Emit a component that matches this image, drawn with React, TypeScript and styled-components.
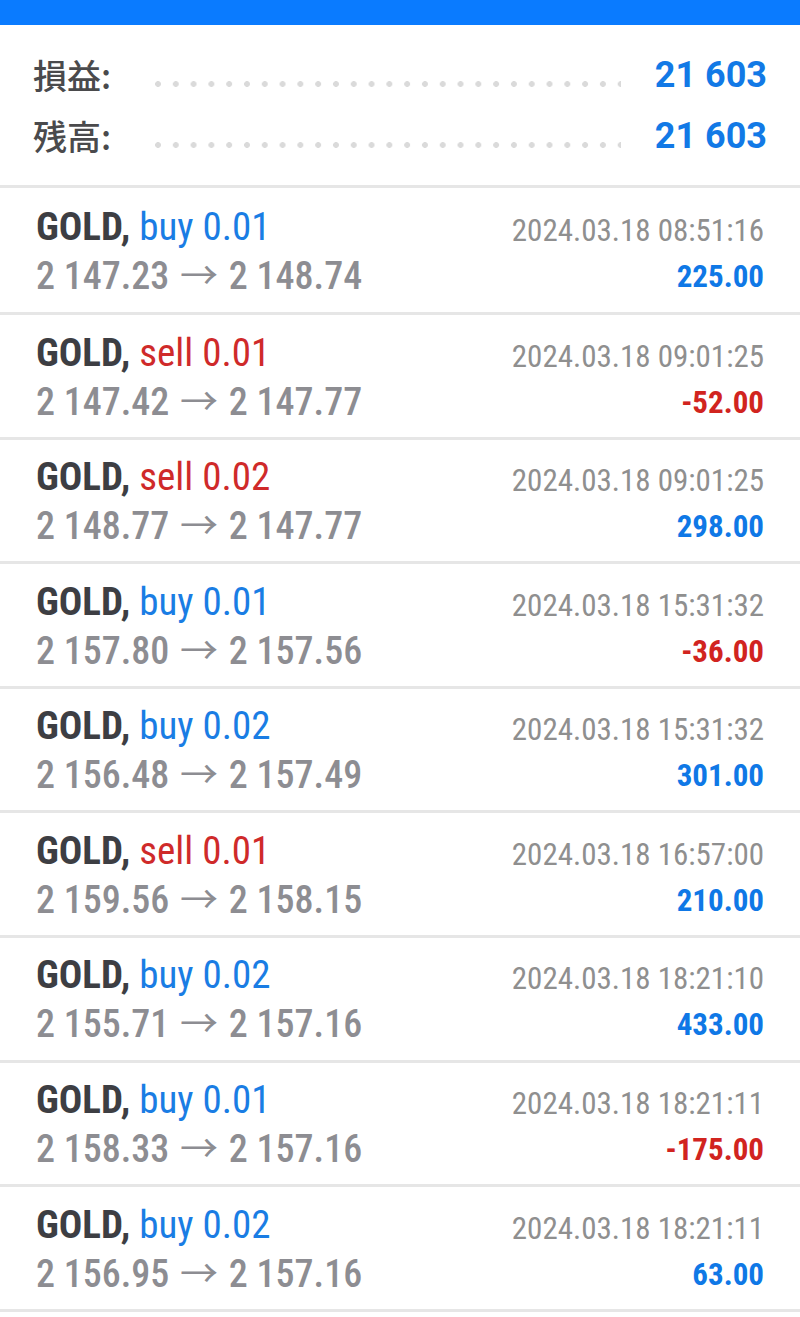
import React from "react";
import styled, { createGlobalStyle } from "styled-components";

const GlobalStyle = createGlobalStyle`
  html, body { margin: 0; padding: 0; background: #ffffff; }
  body { font-family: Roboto, "Noto Sans CJK JP", sans-serif; }
`;

const Page = styled.div`
  width: 800px;
  min-height: 1317px;
  background: #ffffff;
  display: flex;
  flex-direction: column;
`;

const TopBar = styled.div`
  height: 25px;
  background: #0a7bff;
`;

const Summary = styled.section`
  display: flex;
  flex-direction: column;
  padding: 19px 33px 19px 33px;
  border-bottom: 3px solid #e6e6e6;
`;

const SummaryRow = styled.div`
  display: grid;
  grid-template-columns: 122px 1fr 146px;
  align-items: center;
  height: 61px;
`;

const SummaryLabel = styled.span`
  font-family: "Noto Sans CJK JP", sans-serif;
  font-weight: 500;
  font-size: 34px;
  color: #4a4a4c;
  line-height: 1;
`;

const Leader = styled.span`
  height: 6px;
  margin-top: 19px;
  background-image: radial-gradient(circle at 3px 3px, #dadada 2.7px, transparent 3.1px);
  background-size: 17.8px 6px;
  background-repeat: repeat-x;
  background-position: 0 0;
`;

const SummaryValue = styled.span`
  font-family: Roboto, sans-serif;
  font-weight: 700;
  font-size: 36px;
  color: #1279e6;
  text-align: right;
  line-height: 1;
`;

const TradeList = styled.div`
  display: flex;
  flex-direction: column;
`;

const TradeRow = styled.div`
  display: flex;
  justify-content: space-between;
  height: 124.6px;
  box-sizing: border-box;
  padding: 14.5px 36px 0 36px;
  border-bottom: 3px solid #e6e6e6;
  font-family: Roboto, sans-serif;
  font-stretch: 75%;

  &:first-child {
    height: 127px;
    padding-top: 16px;
  }
`;

const LeftCol = styled.div`
  display: flex;
  flex-direction: column;
`;

const RightCol = styled.div`
  display: flex;
  flex-direction: column;
  align-items: flex-end;
  padding-top: 4px;
`;

const TitleLine = styled.div`
  font-size: 39px;
  line-height: 46px;
  white-space: nowrap;
`;

const Symbol = styled.span`
  font-weight: 700;
  color: #3d3e43;
`;

const Side = styled.span<{ $sell: boolean }>`
  font-weight: 400;
  color: ${(p) => (p.$sell ? "#cf2a2a" : "#1a7de4")};
`;

const PriceLine = styled.div`
  font-size: 38px;
  line-height: 46px;
  font-weight: 500;
  color: #8d8d92;
  white-space: nowrap;
`;

const Arrow = styled.span`
  font-family: "Noto Sans CJK JP", sans-serif;
  font-stretch: normal;
  font-weight: 400;
  font-size: 38px;
  margin: 0 2px;
`;

const DateText = styled.div`
  font-size: 31px;
  line-height: 46px;
  color: #8f8f8f;
  white-space: nowrap;
`;

const Profit = styled.div<{ $neg: boolean }>`
  font-size: 31px;
  line-height: 46px;
  font-weight: 700;
  color: ${(p) => (p.$neg ? "#d1241f" : "#0f78e6")};
`;

type Trade = {
  side: "buy" | "sell";
  vol: string;
  time: string;
  open: string;
  close: string;
  profit: string;
};

const trades: Trade[] = [
  { side: "buy", vol: "0.01", time: "08:51:16", open: "2 147.23", close: "2 148.74", profit: "225.00" },
  { side: "sell", vol: "0.01", time: "09:01:25", open: "2 147.42", close: "2 147.77", profit: "-52.00" },
  { side: "sell", vol: "0.02", time: "09:01:25", open: "2 148.77", close: "2 147.77", profit: "298.00" },
  { side: "buy", vol: "0.01", time: "15:31:32", open: "2 157.80", close: "2 157.56", profit: "-36.00" },
  { side: "buy", vol: "0.02", time: "15:31:32", open: "2 156.48", close: "2 157.49", profit: "301.00" },
  { side: "sell", vol: "0.01", time: "16:57:00", open: "2 159.56", close: "2 158.15", profit: "210.00" },
  { side: "buy", vol: "0.02", time: "18:21:10", open: "2 155.71", close: "2 157.16", profit: "433.00" },
  { side: "buy", vol: "0.01", time: "18:21:11", open: "2 158.33", close: "2 157.16", profit: "-175.00" },
  { side: "buy", vol: "0.02", time: "18:21:11", open: "2 156.95", close: "2 157.16", profit: "63.00" },
];

export default function App() {
  return (
    <Page>
      <GlobalStyle />
      <TopBar />
      <Summary>
        <SummaryRow>
          <SummaryLabel>損益:</SummaryLabel>
          <Leader />
          <SummaryValue>21 603</SummaryValue>
        </SummaryRow>
        <SummaryRow>
          <SummaryLabel>残高:</SummaryLabel>
          <Leader />
          <SummaryValue>21 603</SummaryValue>
        </SummaryRow>
      </Summary>
      <TradeList>
        {trades.map((t, i) => (
          <TradeRow key={i}>
            <LeftCol>
              <TitleLine>
                <Symbol>GOLD,</Symbol> <Side $sell={t.side === "sell"}>{t.side} {t.vol}</Side>
              </TitleLine>
              <PriceLine>
                {t.open} <Arrow>→</Arrow> {t.close}
              </PriceLine>
            </LeftCol>
            <RightCol>
              <DateText>2024.03.18 {t.time}</DateText>
              <Profit $neg={t.profit.startsWith("-")}>{t.profit}</Profit>
            </RightCol>
          </TradeRow>
        ))}
      </TradeList>
    </Page>
  );
}
